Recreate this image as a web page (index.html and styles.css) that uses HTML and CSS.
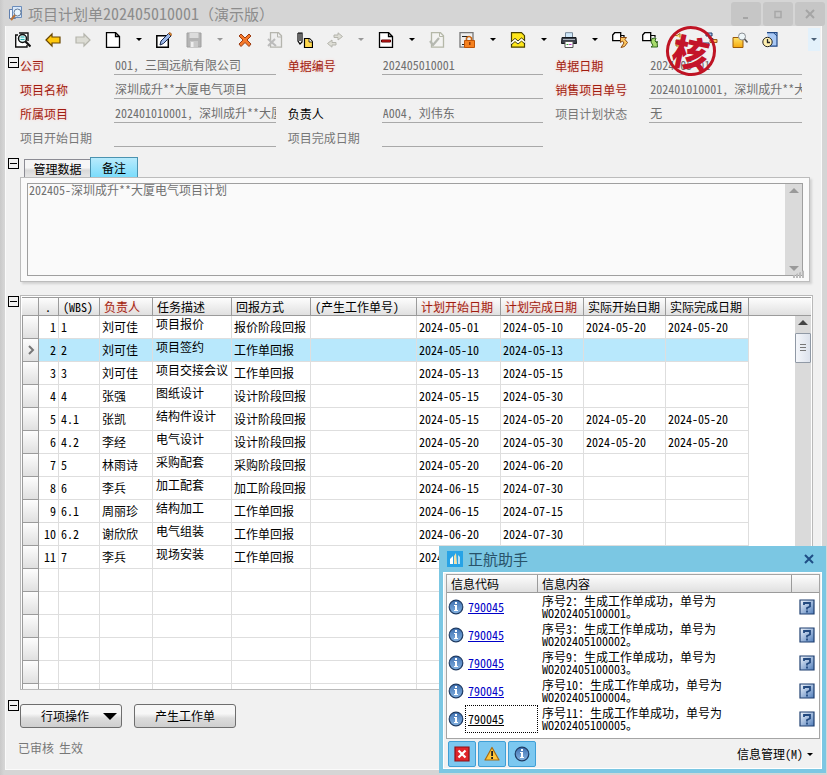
FILE: index.html
```html
<!DOCTYPE html>
<html lang="zh-CN">
<head>
<meta charset="utf-8">
<title>项目计划单</title>
<link rel="stylesheet" href="styles.css">
</head>
<body>
<svg class="defs" aria-hidden="true">
  <defs>
    <linearGradient id="blueball" x1="0" y1="0" x2="0" y2="1"><stop offset="0" stop-color="#3d6fb0"/><stop offset="1" stop-color="#86b4e2"/></linearGradient>
    <linearGradient id="bluebox" x1="0" y1="0" x2="1" y2="1"><stop offset="0" stop-color="#f2f7fd"/><stop offset="1" stop-color="#4f7cba"/></linearGradient>
    <linearGradient id="amber" x1="0" y1="0" x2="0" y2="1"><stop offset="0" stop-color="#ffe46a"/><stop offset="1" stop-color="#f5a80c"/></linearGradient>
    <symbol id="info" viewBox="0 0 16 16"><circle cx="8" cy="8" r="6.8" fill="url(#blueball)" stroke="#1f3b63" stroke-width="1.2"/><path d="M7 3h2v2H7zM6 6h3v5h1v1H6v-1h1V7H6z" fill="#fff"/></symbol>
    <symbol id="help" viewBox="0 0 16 16"><path d="M1 1h14v14H1z" fill="url(#bluebox)" stroke="#1f3f70" stroke-width="1.2"/><path d="M5 6V4h6v3.500L8 9v1.500M8 11.500v2" fill="none" stroke="#23497f" stroke-width="1.800"/></symbol>
    <symbol id="arrow" viewBox="0 0 16 16"><path d="M1 8l6-6v3h8v6H7v3z" stroke-width="1.200"/></symbol>
    <symbol id="page" viewBox="0 0 16 16"><path d="M1.500.5h9l4 4v11h-13zM10.500.5v4h4" stroke-width="1.300"/></symbol>
  </defs>
</svg>
<div class="window">
  <header class="titlebar">
    <svg class="icon" viewBox="0 0 16 16"><path d="M1.500 4.500h6v9h-6z" fill="#f4f8ff" stroke="#5f7fae"/><path d="M4.500 1.500h9v11h-9z" fill="#d8e8fa" stroke="#6b8cba"/><circle cx="9.500" cy="7.500" r="3.500" fill="#eaf6ff" stroke="#667c98"/><path d="M7 10l-4 5" stroke="#b8743c" stroke-width="2.200"/></svg>
    <h1>项目计划单<span class="serial">202405010001</span>（演示版）</h1>
    <div class="caption-buttons">
      <button type="button" aria-label="最小化"><svg class="icon" viewBox="0 0 16 16"><path d="M5 12h5" stroke="#a5a5a5" stroke-width="2"/></svg></button>
      <button type="button" aria-label="最大化"><svg class="icon" viewBox="0 0 16 16"><path d="M5 5.500h6v6H5z" fill="none" stroke="#a8a8a8" stroke-width="1.500"/></svg></button>
      <button type="button" aria-label="关闭"><svg class="icon" viewBox="0 0 16 16"><path d="M4 4l8 8M12 4l-8 8" stroke="#a5a5a5" stroke-width="2"/></svg></button>
    </div>
  </header>
  <main class="client">
    <div class="toolbar">
      <button type="button" class="tool" aria-label="查找"><svg class="icon" viewBox="0 0 16 16"><path d="M3 3H.7v12H12v-2M4 1h9v8" fill="#fff" stroke="#111" stroke-width="1.400"/><circle cx="7.500" cy="6.500" r="4" fill="#dffafa" stroke="#111" stroke-width="1.500"/><path d="M5.500 5h4M5.500 7.500h4" stroke="#2aa" stroke-width="1.200"/><path d="M10.500 9.500l5 5" stroke="#111" stroke-width="2.200"/></svg></button>
      <button type="button" class="tool" aria-label="上一张"><svg class="icon back"><use href="#arrow"/></svg></button>
      <button type="button" class="tool" aria-label="下一张"><svg class="icon forward"><use href="#arrow"/></svg></button>
      <button type="button" class="tool" aria-label="新建"><svg class="icon sheet"><use href="#page"/></svg></button>
      <button type="button" class="drop" aria-label="新建选项"></button>
      <button type="button" class="tool" aria-label="编辑"><svg class="icon" viewBox="0 0 16 16"><path d="M.8 3.700h11.500V15.200H.8z" fill="#fff" stroke="#000" stroke-width="1.500"/><path d="M4 13l1-4 7.500-7.500 2.500 2.500L7.500 11.500z" fill="#9db8e8" stroke="#16284f"/><path d="M12.500 1.500l1.300-1.200 2 2L15 4z" fill="#e08a2c" stroke="#7a3b10" stroke-width=".6"/></svg></button>
      <button type="button" class="tool" aria-label="保存" disabled><svg class="icon" viewBox="0 0 16 16"><path d="M1 1h14v14H1z" fill="#b4b4b4" stroke="#a0a0a0"/><path d="M3.500 1h9v5h-9z" fill="#dcdcdc"/><path d="M4 9h8v6H4z" fill="#c9c9c9"/><path d="M5 10h2.500v5H5z" fill="#eee"/></svg></button>
      <button type="button" class="drop" aria-label="保存选项" disabled></button>
      <button type="button" class="tool" aria-label="删除"><svg class="icon" viewBox="0 0 16 16"><path d="M2 4l2-2 4 4 4-4 2 2-4 4 4 4-2 2.500-4-4-4 4L2 12l4-4z" fill="#f5792a" stroke="#9c3a10"/></svg></button>
      <button type="button" class="tool" aria-label="作废" disabled><svg class="icon" viewBox="0 0 16 16"><path d="M3.500.7h8l3 3v11.500h-11z" fill="#eee" stroke="#b5b5ae" stroke-width="1.300"/><path d="M10.500 1v4h4" fill="none" stroke="#b5b5ae"/><path d="M1 7l8 7M8 7l-7 7" stroke="#bbb" stroke-width="2"/></svg></button>
      <button type="button" class="tool" aria-label="附件"><svg class="icon" viewBox="0 0 16 16"><path d="M1 1v8l2 3 2-2V1H1M3 1v8" fill="#fff" stroke="#000" stroke-width="1.200"/><path d="M7.500 6.500h5l3 3v6h-8z" fill="#ffd84d" stroke="#000" stroke-width="1.200"/><path d="M12 6.500v3.500h3.500" fill="#fff" stroke="#000" stroke-width=".8"/></svg></button>
      <button type="button" class="tool" aria-label="关联" disabled><svg class="icon" viewBox="0 0 16 16"><path d="M7 5.500V3h4V.8L15.500 4.500 11 8V5.500zM9 10.500V13H5v2.200L.5 11.500 5 8v2.500z" fill="#ddddd5" stroke="#b4b4ac"/></svg></button>
      <button type="button" class="drop" aria-label="关联选项" disabled></button>
      <button type="button" class="tool" aria-label="红冲"><svg class="icon sheet"><use href="#page"/><path d="M3.500 8h9v2h-9z" fill="#e22" stroke="#500"/></svg></button>
      <button type="button" class="drop" aria-label="红冲选项"></button>
      <button type="button" class="tool" aria-label="审核" disabled><svg class="icon" viewBox="0 0 16 16"><path d="M2.500.7h9l3 3v11.500h-12z" fill="#f3f3f1" stroke="#b5b8a8" stroke-width="1.300"/><path d="M10.500 1v3.500h4" fill="none" stroke="#b5b8a8"/><path d="M1 9l3 4 6-7" fill="none" stroke="#b5b8b0" stroke-width="2.200"/></svg></button>
      <button type="button" class="tool" aria-label="锁定"><svg class="icon" viewBox="0 0 16 16"><path d="M1 .7h13v14.500H1z" fill="#eee" stroke="#777" stroke-width="1.300"/><path d="M3 4.500h7M3 12.500h3" stroke="#222"/><path d="M7.500 9V6q2.500-3 5 0v3" fill="none" stroke="#c96612" stroke-width="1.600"/><path d="M5.500 8.500h10v7h-10z" fill="#f5811f" stroke="#bd5407"/><path d="M10 10h1.500v3H10z" fill="#8d3908"/></svg></button>
      <button type="button" class="drop" aria-label="锁定选项"></button>
      <button type="button" class="tool" aria-label="图表"><svg class="icon" viewBox="0 0 16 16"><path d="M1.500.7h10l3 3v11.500h-13z" fill="#ffe71a" stroke="#4a4300" stroke-width="1.200"/><path d="M1 10l4-3.500L8 9l3.500-3L15 9M1 13l4-3.500L8 12l3.500-3L15 12" fill="none" stroke="#222"/><path d="M1 11.500L5 8l3 2.500L11.500 7.500 15 10.500" fill="none" stroke="#fff" stroke-width="1.500"/></svg></button>
      <button type="button" class="drop" aria-label="图表选项"></button>
      <button type="button" class="tool" aria-label="打印"><svg class="icon" viewBox="0 0 16 16"><path d="M4.500.7h7V6h-7z" fill="#cfe8fa" stroke="#789"/><path d="M1 5.500h14l.5 6H.5z" fill="#3c424c" stroke="#15181d"/><path d="M2 7.500h12" stroke="#aeb5bf"/><path d="M4 9.500h8v6H4z" fill="#fff" stroke="#555"/><path d="M5.500 12.500h2" stroke="#3a3"/><path d="M8 12.500h2.500" stroke="#c3c"/></svg></button>
      <button type="button" class="drop" aria-label="打印选项"></button>
      <button type="button" class="tool" aria-label="上游单据"><svg class="icon" viewBox="0 0 16 16"><path d="M.7 3l2-2.300h6v8h-8z" fill="#fff" stroke="#000" stroke-width="1.300"/><path d="M9 3.500h3v2" fill="none" stroke="#000" stroke-width="1.200"/><path d="M8.500 5.500h6L13 7.500l2.500 3-3 4-3.500 1 3-4.500-1.500-2-2 1.500z" fill="#ffc861" stroke="#8a4b12"/></svg></button>
      <button type="button" class="tool" aria-label="下游单据"><svg class="icon" viewBox="0 0 16 16"><path d="M.7 3l2-2.300h6v8h-8z" fill="#fff" stroke="#000" stroke-width="1.300"/><path d="M9 3.500h4v2" fill="none" stroke="#000" stroke-width="1.200"/><path d="M10 6.500l4-.5-1 3 2 2v-2l.5 6H9l2-1.500L9 10z" fill="#a9dc6c" stroke="#31671f"/></svg></button>
      <button type="button" class="tool" aria-label="生成"><svg class="icon" viewBox="0 0 16 16"><path d="M1 3.500h4l3-2v4" fill="#ffe07a" stroke="#a67720"/><path d="M4 8h8v6H4z" fill="#ffd071" stroke="#a67720"/></svg></button>
      <button type="button" class="tool" aria-label="流程"><svg class="icon" viewBox="0 0 16 16"><path d="M4 1h6v3H4zM1 11h6v3H1z" fill="#a8c4ee" stroke="#1d3a6b"/><path d="M8 7.500h7v3H8z" fill="#ffbf5e" stroke="#9c5d18"/><path d="M7 4v2.500h4v1" fill="none" stroke="#1d3a6b"/></svg></button>
      <button type="button" class="tool" aria-label="浏览"><svg class="icon" viewBox="0 0 16 16"><path d="M1 5.500h10v10H1z" fill="url(#amber)" stroke="#9a5a08"/><circle cx="10" cy="4.500" r="3.500" fill="#eef6f8" stroke="#8b8f94"/><path d="M12.500 7l3 3.500" stroke="#555" stroke-width="1.600"/></svg></button>
      <button type="button" class="tool" aria-label="历史"><svg class="icon" viewBox="0 0 16 16"><path d="M5 .7h10v13.500H8" fill="#a8c8f5" stroke="#234a86" stroke-width="1.200"/><path d="M11.500.7L15 4" stroke="#234a86"/><circle cx="5.500" cy="10" r="4.700" fill="#fff0b0" stroke="#222"/><path d="M5.500 7v3.500H8" fill="none" stroke="#222" stroke-width="1.300"/></svg></button>
      <button type="button" class="overflow" aria-label="更多"></button>
    </div>
    <div class="seal">核</div>

    <section class="section">
      <button type="button" class="toggle" aria-label="折叠表头"></button>
      <form class="fields">
        <div class="field"><label class="key" for="company">公司</label><input id="company" readonly value="001, 三国远航有限公司"></div>
        <div class="field"><label class="key" for="number">单据编号</label><input id="number" readonly value="202405010001"></div>
        <div class="field"><label class="key" for="date">单据日期</label><input id="date" readonly value="2024-05-01"></div>
        <div class="field wide"><label class="key" for="name">项目名称</label><input id="name" readonly value="深圳成升**大厦电气项目"></div>
        <div class="field"><label class="key" for="sales">销售项目单号</label><input id="sales" readonly value="202401010001, 深圳成升**大厦"></div>
        <div class="field"><label class="key" for="parent">所属项目</label><input id="parent" readonly value="202401010001, 深圳成升**大厦"></div>
        <div class="field"><label class="strong" for="owner">负责人</label><input id="owner" readonly value="A004, 刘伟东"></div>
        <div class="field"><label for="state">项目计划状态</label><input id="state" readonly value="无"></div>
        <div class="field"><label for="start">项目开始日期</label><input id="start" readonly></div>
        <div class="field"><label for="finish">项目完成日期</label><input id="finish" readonly></div>
      </form>
    </section>

    <section class="section notes">
      <button type="button" class="toggle" aria-label="折叠备注"></button>
      <div class="tabbox">
        <div class="tabs" role="tablist">
          <button type="button" role="tab" class="tab">管理数据</button>
          <button type="button" role="tab" class="tab active" aria-selected="true">备注</button>
        </div>
        <div class="panel">
          <div class="memo">
            <textarea aria-label="备注" readonly>202405-深圳成升**大厦电气项目计划</textarea>
            <div class="track dim"><i class="up"></i><i class="down"></i></div>
          </div>
        </div>
      </div>
    </section>

    <section class="section grid">
      <button type="button" class="toggle" aria-label="折叠明细"></button>
      <div class="sheetbox">
        <table class="tasks">
          <colgroup><col class="c0"><col class="c1"><col class="c2"><col class="c3"><col class="c4"><col class="c4"><col class="c6"><col class="c7"><col class="c8"><col class="c9"><col class="c8"><col></colgroup>
          <thead><tr><th></th><th class="num">.</th><th>(WBS)</th><th class="key">负责人</th><th>任务描述</th><th>回报方式</th><th>(产生工作单号)</th><th class="key">计划开始日期</th><th class="key">计划完成日期</th><th>实际开始日期</th><th>实际完成日期</th><th></th></tr></thead>
          <tbody>
            <tr><th></th><td>1</td><td>1</td><td>刘可佳</td><td>项目报价</td><td>报价阶段回报</td><td></td><td>2024-05-01</td><td>2024-05-10</td><td>2024-05-20</td><td>2024-05-20</td><td></td></tr>
            <tr class="current"><th><svg viewBox="0 0 8 10"><path d="M2 1l4 4-4 4" fill="none" stroke="#777" stroke-width="2"/></svg></th><td>2</td><td>2</td><td>刘可佳</td><td>项目签约</td><td>工作单回报</td><td></td><td>2024-05-10</td><td>2024-05-13</td><td></td><td></td><td></td></tr>
            <tr><th></th><td>3</td><td>3</td><td>刘可佳</td><td>项目交接会议</td><td>工作单回报</td><td></td><td>2024-05-13</td><td>2024-05-15</td><td></td><td></td><td></td></tr>
            <tr><th></th><td>4</td><td>4</td><td>张强</td><td>图纸设计</td><td>设计阶段回报</td><td></td><td>2024-05-15</td><td>2024-05-30</td><td></td><td></td><td></td></tr>
            <tr><th></th><td>5</td><td>4.1</td><td>张凯</td><td>结构件设计</td><td>设计阶段回报</td><td></td><td>2024-05-15</td><td>2024-05-20</td><td>2024-05-20</td><td>2024-05-20</td><td></td></tr>
            <tr><th></th><td>6</td><td>4.2</td><td>李经</td><td>电气设计</td><td>设计阶段回报</td><td></td><td>2024-05-20</td><td>2024-05-30</td><td>2024-05-20</td><td>2024-05-20</td><td></td></tr>
            <tr><th></th><td>7</td><td>5</td><td>林雨诗</td><td>采购配套</td><td>采购阶段回报</td><td></td><td>2024-05-20</td><td>2024-06-20</td><td></td><td></td><td></td></tr>
            <tr><th></th><td>8</td><td>6</td><td>李兵</td><td>加工配套</td><td>加工阶段回报</td><td></td><td>2024-06-15</td><td>2024-07-30</td><td></td><td></td><td></td></tr>
            <tr><th></th><td>9</td><td>6.1</td><td>周丽珍</td><td>结构加工</td><td>工作单回报</td><td></td><td>2024-06-15</td><td>2024-07-15</td><td></td><td></td><td></td></tr>
            <tr><th></th><td>10</td><td>6.2</td><td>谢欣欣</td><td>电气组装</td><td>工作单回报</td><td></td><td>2024-06-20</td><td>2024-07-30</td><td></td><td></td><td></td></tr>
            <tr><th></th><td>11</td><td>7</td><td>李兵</td><td>现场安装</td><td>工作单回报</td><td></td><td>2024-</td><td></td><td></td><td></td><td></td></tr>
            <tr><th></th><td></td><td></td><td></td><td></td><td></td><td></td><td></td><td></td><td></td><td></td><td></td></tr>
            <tr><th></th><td></td><td></td><td></td><td></td><td></td><td></td><td></td><td></td><td></td><td></td><td></td></tr>
            <tr><th></th><td></td><td></td><td></td><td></td><td></td><td></td><td></td><td></td><td></td><td></td><td></td></tr>
            <tr><th></th><td></td><td></td><td></td><td></td><td></td><td></td><td></td><td></td><td></td><td></td><td></td></tr>
            <tr><th></th><td></td><td></td><td></td><td></td><td></td><td></td><td></td><td></td><td></td><td></td><td></td></tr>
            <tr><th></th><td></td><td></td><td></td><td></td><td></td><td></td><td></td><td></td><td></td><td></td><td></td></tr>
          </tbody>
        </table>
        <div class="track over"><i class="up"></i><b class="thumb"></b></div>
      </div>
    </section>

    <section class="section actions">
      <button type="button" class="toggle" aria-label="折叠操作"></button>
      <div class="buttons">
        <button type="button" class="btn menu">行项操作</button>
        <button type="button" class="btn">产生工作单</button>
      </div>
    </section>
    <footer class="status"><span>已审核</span><span>生效</span></footer>
  </main>
</div>

<aside class="assistant">
  <header class="assistant-title">
    <svg class="icon" viewBox="0 0 16 16"><path d="M0 0h16v16H0z" fill="#27a3e6"/><path d="M3 13V8l3-3v8z" fill="#fff"/><path d="M7 13V5l2-3 1 11z" fill="#f3e2a8"/><path d="M11 13V4l2 2v7z" fill="#b8e2f8"/></svg>
    <h2>正航助手</h2>
    <button type="button" aria-label="关闭"><svg viewBox="0 0 10 10"><path d="M1 1l8 8M9 1L1 9" stroke="#1f4e86" stroke-width="2"/></svg></button>
  </header>
  <div class="assistant-body">
    <div class="messages-box">
      <table class="messages">
        <colgroup><col class="m0"><col><col class="m2"></colgroup>
        <thead><tr><th>信息代码</th><th>信息内容</th><th></th></tr></thead>
        <tbody>
          <tr><td><div class="code"><svg class="icon"><use href="#info"/></svg><a href="#m1">790045</a></div></td><td>序号<span class="half">2</span>：生成工作单成功，单号为<br><span class="half">WO202405100001</span>。</td><td><svg class="icon"><use href="#help"/></svg></td></tr>
          <tr><td><div class="code"><svg class="icon"><use href="#info"/></svg><a href="#m2">790045</a></div></td><td>序号<span class="half">3</span>：生成工作单成功，单号为<br><span class="half">WO202405100002</span>。</td><td><svg class="icon"><use href="#help"/></svg></td></tr>
          <tr><td><div class="code"><svg class="icon"><use href="#info"/></svg><a href="#m3">790045</a></div></td><td>序号<span class="half">9</span>：生成工作单成功，单号为<br><span class="half">WO202405100003</span>。</td><td><svg class="icon"><use href="#help"/></svg></td></tr>
          <tr><td><div class="code"><svg class="icon"><use href="#info"/></svg><a href="#m4">790045</a></div></td><td>序号<span class="half">10</span>：生成工作单成功，单号为<br><span class="half">WO202405100004</span>。</td><td><svg class="icon"><use href="#help"/></svg></td></tr>
          <tr><td><div class="code"><svg class="icon"><use href="#info"/></svg><a class="focused" href="#m5">790045</a></div></td><td>序号<span class="half">11</span>：生成工作单成功，单号为<br><span class="half">WO202405100005</span>。</td><td><svg class="icon"><use href="#help"/></svg></td></tr>
        </tbody>
      </table>
    </div>
    <footer class="filters">
      <button type="button" class="filter" aria-label="错误"><svg class="icon" viewBox="0 0 16 16"><path d="M1 1h14v14H1z" fill="#e0252b" stroke="#8d1116" stroke-width="1.200"/><path d="M4.500 4.500l7 7M11.500 4.500l-7 7" stroke="#fff" stroke-width="2.200"/></svg></button>
      <button type="button" class="filter" aria-label="警告"><svg class="icon" viewBox="0 0 16 16"><path d="M8 1.500L15 14H1z" fill="#ffc73a" stroke="#a86a10" stroke-width="1.200" stroke-linejoin="round"/><path d="M7.200 5h1.800v5H7.200zM7.200 11h1.800v2H7.200z" fill="#222"/></svg></button>
      <button type="button" class="filter" aria-label="信息"><svg class="icon"><use href="#info"/></svg></button>
      <button type="button" class="manage">信息管理(M)</button>
    </footer>
  </div>
</aside>
</body>
</html>
```
FILE: styles.css
```css
* { box-sizing: border-box; }

body {
  margin: 0;
  overflow: hidden;
  background: #d3d3d3;
  color: #000;
  font: 12px/16px "Noto Sans CJK SC", sans-serif;
  font-feature-settings: "hwid";
}

button, input, textarea {
  margin: 0;
  padding: 0;
  border: 0;
  background: none;
  color: inherit;
  font: inherit;
  font-feature-settings: inherit;
  outline: 0;
}

.defs { position: absolute; width: 0; height: 0; }
.icon { display: block; flex: none; width: 16px; height: 16px; }
.half { font-feature-settings: "hwid"; }

.window {
  display: flex;
  flex-direction: column;
  height: 100vh;
  padding: 0 5px 5px;
  background: linear-gradient(90deg, #c9c9c9, #d5d5d5 4px);
}

.titlebar {
  display: flex;
  flex: none;
  align-items: center;
  height: 26px;
  margin-right: -3px;
  padding-left: 3px;
}
.titlebar h1 {
  flex: 1;
  margin: 0 0 0 4px;
  color: #8c8c8c;
  font-size: 15px;
  font-weight: 400;
  font-feature-settings: normal;
}
.titlebar .serial { font-size: 16px; font-feature-settings: "hwid"; }
.caption-buttons { display: flex; align-self: flex-start; gap: 2px; padding-top: 2px; }
.caption-buttons button {
  display: grid;
  place-items: center;
  width: 30px;
  height: 24px;
  border-radius: 3px;
  background: #c6c6c6;
}

.client {
  position: relative;
  display: flex;
  flex: 1;
  flex-direction: column;
  min-height: 0;
  padding: 0 8px 0 2px;
  border: 1px solid #fafafa;
  border-top: 0;
  background: #f1f1f1;
}

.toolbar { display: flex; flex: none; height: 25px; margin-right: -7px; padding-top: 2px; }
.tool { display: grid; place-items: center; flex: none; width: 30px; }
.drop { display: grid; place-items: center; flex: none; width: 21px; }
.overflow { display: grid; place-items: center; width: 12px; margin-left: auto; background: #e3f1fb; }
.drop::after, .overflow::after {
  border: 3px solid transparent;
  border-top-color: #000;
  border-bottom: 0;
  content: "";
}
.drop:disabled::after { border-top-color: #999; }
.overflow::after { border-top-color: #4a6078; }
.back { fill: #ffc90e; stroke: #6a4700; }
.forward { fill: #dcdcd4; stroke: #b5b5ac; transform: rotate(180deg); }
.sheet { fill: #fff; stroke: #000; }

.seal {
  position: absolute;
  top: 0;
  left: 660px;
  display: grid;
  place-items: center;
  width: 50px;
  height: 50px;
  border: 3px solid #bf1424;
  border-radius: 50%;
  color: #c4142a;
  font-size: 36px;
  font-weight: 900;
  line-height: 40px;
  transform: rotate(12deg);
}

.section { display: grid; flex: none; grid-template-columns: 12px minmax(0, 1fr); align-items: start; }
.toggle {
  position: relative;
  width: 11px;
  height: 11px;
  border: 1px solid #000;
}
.toggle::after { display: block; height: 1px; margin: 0 1px; background: #000; content: ""; }
.fields {
  display: grid;
  grid-template-columns: 256fr 256fr 247fr;
  gap: 0 12px;
  padding-right: 11px;
}
.section:first-of-type .toggle { margin-top: 6px; }
.field { display: flex; height: 24px; }
.field.wide { grid-column: span 2; }
.field label { flex: none; width: 94px; padding-top: 7px; color: #777; }
.field label.key, th.key { color: #a01c10; text-shadow: 0 0 3px #ffc9c0; }
.field label.strong { color: #000; }
.field input {
  flex: 1;
  min-width: 0;
  height: 24px;
  padding: 3px 0 0 1px;
  border-bottom: 1px solid #a9a9a9;
  color: #6f6f6f;
}

.notes { margin-top: 10px; }
.notes .toggle, .grid .toggle { margin-top: 1px; }
.tabs { display: flex; align-items: flex-end; height: 20px; padding-left: 4px; }
.tab {
  width: 66px;
  height: 18px;
  border: 1px solid #8c8c94;
  border-width: 1px 0 0 1px;
  background: linear-gradient(#f6f6f6 45%, #d9d9d9 60%, #e6e6e6);
}
.tab.active {
  width: 48px;
  height: 20px;
  border: 1px solid #4b93b0;
  border-bottom: 0;
  background: linear-gradient(#b8ebfd, #7bdcfb);
}
.panel {
  margin-right: 3px;
  padding: 5px 6px;
  border: 1px solid #bcbcbc;
  background: #fafafa;
  box-shadow: 2px 2px 2px #d2d2d2;
}
.memo { position: relative; display: flex; height: 93px; border: 1px solid #9f9f9f; }
.memo::after {
  position: absolute;
  right: -3px;
  bottom: -3px;
  width: 12px;
  height: 8px;
  background: repeating-linear-gradient(90deg, #bbb 0 2px, transparent 2px 3px);
  clip-path: polygon(0 70%, 100% 0, 100% 100%, 0 100%);
  content: "";
}
.memo textarea { flex: 1; min-width: 0; padding: 0 0 0 1px; color: #707070; line-height: 12px; resize: none; }

.track { display: flex; flex-direction: column; align-items: center; width: 17px; background: #dadada; }
.track i { border: 5px solid transparent; }
.track .up { margin-top: 4px; border-top: 0; border-bottom-color: #444; }
.track .down { margin: auto 0 4px; border-top-color: #999; border-bottom: 0; }
.dim .up { border-bottom-color: #999; }
.over { position: absolute; top: 20px; right: 1px; bottom: 0; width: 16px; }
.thumb {
  width: 16px;
  height: 30px;
  margin-top: 8px;
  padding: 10px 4px;
  border: 1px solid #9099a5;
  border-radius: 1px;
  background: repeating-linear-gradient(#777 0 1px, transparent 1px 3px) content-box, linear-gradient(90deg, #f4f6fa, #dce2ec);
}

.grid { flex: 1; min-height: 0; margin-top: 13px; grid-template-rows: minmax(0, 1fr); }
.sheetbox {
  position: relative;
  height: 100%;
  padding: 1px 1px 0;
  overflow: hidden;
  border: 1px solid #b9b9b9;
  background: #fff;
}
table { width: 100%; table-layout: fixed; border-collapse: separate; border-spacing: 0; }
th { font-weight: 400; text-align: left; }
.c0 { width: 17px; } .c1 { width: 20px; } .c2 { width: 41px; } .c3 { width: 53px; }
.c4 { width: 79px; } .c6 { width: 106px; } .c7 { width: 84px; } .c8 { width: 83px; } .c9 { width: 82px; }
.tasks th, .messages th {
  padding: 0 0 0 4px;
  overflow: hidden;
  border-right: 1px solid #9b9b9b;
  border-bottom: 1px solid #9b9b9b;
  background: linear-gradient(#fdfdfd, #e0e0e0);
  white-space: nowrap;
}
.tasks thead th { height: 19px; border-top: 1px solid #9b9b9b; line-height: 17px; }
.tasks thead th:last-child { border-right: 0; }
.tasks tbody th { padding: 0 4px; border-left: 1px solid #9b9b9b; }
.tasks th svg { display: block; width: 8px; height: 10px; }
.tasks tbody tr { height: 23px; }
.tasks td {
  height: 23px;
  padding: 0 0 0 2px;
  overflow: hidden;
  border-right: 1px solid #dedede;
  border-bottom: 1px solid #dedede;
  white-space: nowrap;
}
.tasks td:nth-child(2) { padding-right: 2px; text-align: right; }
.tasks .num { padding-right: 7px; text-align: right; }
.tasks td:nth-child(5) { padding-bottom: 6px; padding-left: 3px; line-height: 16px; }
.tasks td:last-child { border: 0; background: #fff; }
.current td { background: #b8e8fc; }

.actions { margin-top: 10px; }
.buttons { display: flex; gap: 12px; padding-top: 4px; }
.btn {
  width: 102px;
  height: 24px;
  border: 1px solid #6e6e6e;
  border-radius: 3px;
  background: linear-gradient(#f7f7f7 40%, #dcdcdc 60%, #cfcfcf);
}
.menu { display: flex; align-items: center; justify-content: space-between; padding: 0 4px 0 20px; }
.menu::after { border: 7px solid transparent; border-top-color: #000; border-bottom: 0; content: ""; }
.status { display: flex; flex: none; gap: 5px; height: 41px; padding: 12px 0 0 10px; color: #777; }

.assistant {
  position: fixed;
  right: 1px;
  bottom: 2px;
  width: 387px;
  padding: 0 4px 4px;
  background: #7bc7e3;
}
.assistant-title { display: flex; align-items: center; height: 26px; padding: 0 8px 0 4px; }
.assistant-title h2 { flex: 1; margin: 0 0 0 5px; color: #285269; font-size: 15px; font-weight: 400; }
.assistant-title svg { display: block; }
.assistant-title button svg { width: 10px; height: 10px; }
.assistant-body { padding: 1px 1px 0 2px; border: 1px solid #fff; background: #f1f1f1; }
.messages-box { height: 165px; border: 1px solid #a5a5a5; background: #fff; }
.m0 { width: 91px; } .m2 { width: 27px; }
.messages th { height: 18px; line-height: 17px; }
.messages th:last-child { border-right: 0; }
.messages td { height: 28px; padding: 0 0 0 4px; font-feature-settings: normal; line-height: 12px; white-space: nowrap; }
.messages td:first-child { padding: 0; font-feature-settings: "hwid"; }
.messages td:last-child { padding-left: 7px; }
.code { display: flex; align-items: center; height: 28px; padding-left: 1px; }
.code a { flex: 1; margin-left: 1px; padding: 7px 2px; border: 1px dotted transparent; color: #0000c8; }
.code a.focused { border-color: #000; color: #000; }
.filters { display: flex; gap: 2px; padding: 2px 7px 1px 2px; }
.filter {
  display: grid;
  place-items: center;
  width: 28px;
  height: 26px;
  border: 1px solid #3f9fd6;
  border-radius: 2px;
  background: #7cc8f0;
}
.manage { display: flex; align-items: center; gap: 4px; margin-left: auto; }
.manage::after { border: 3px solid transparent; border-top-color: #000; border-bottom: 0; content: ""; }
```
